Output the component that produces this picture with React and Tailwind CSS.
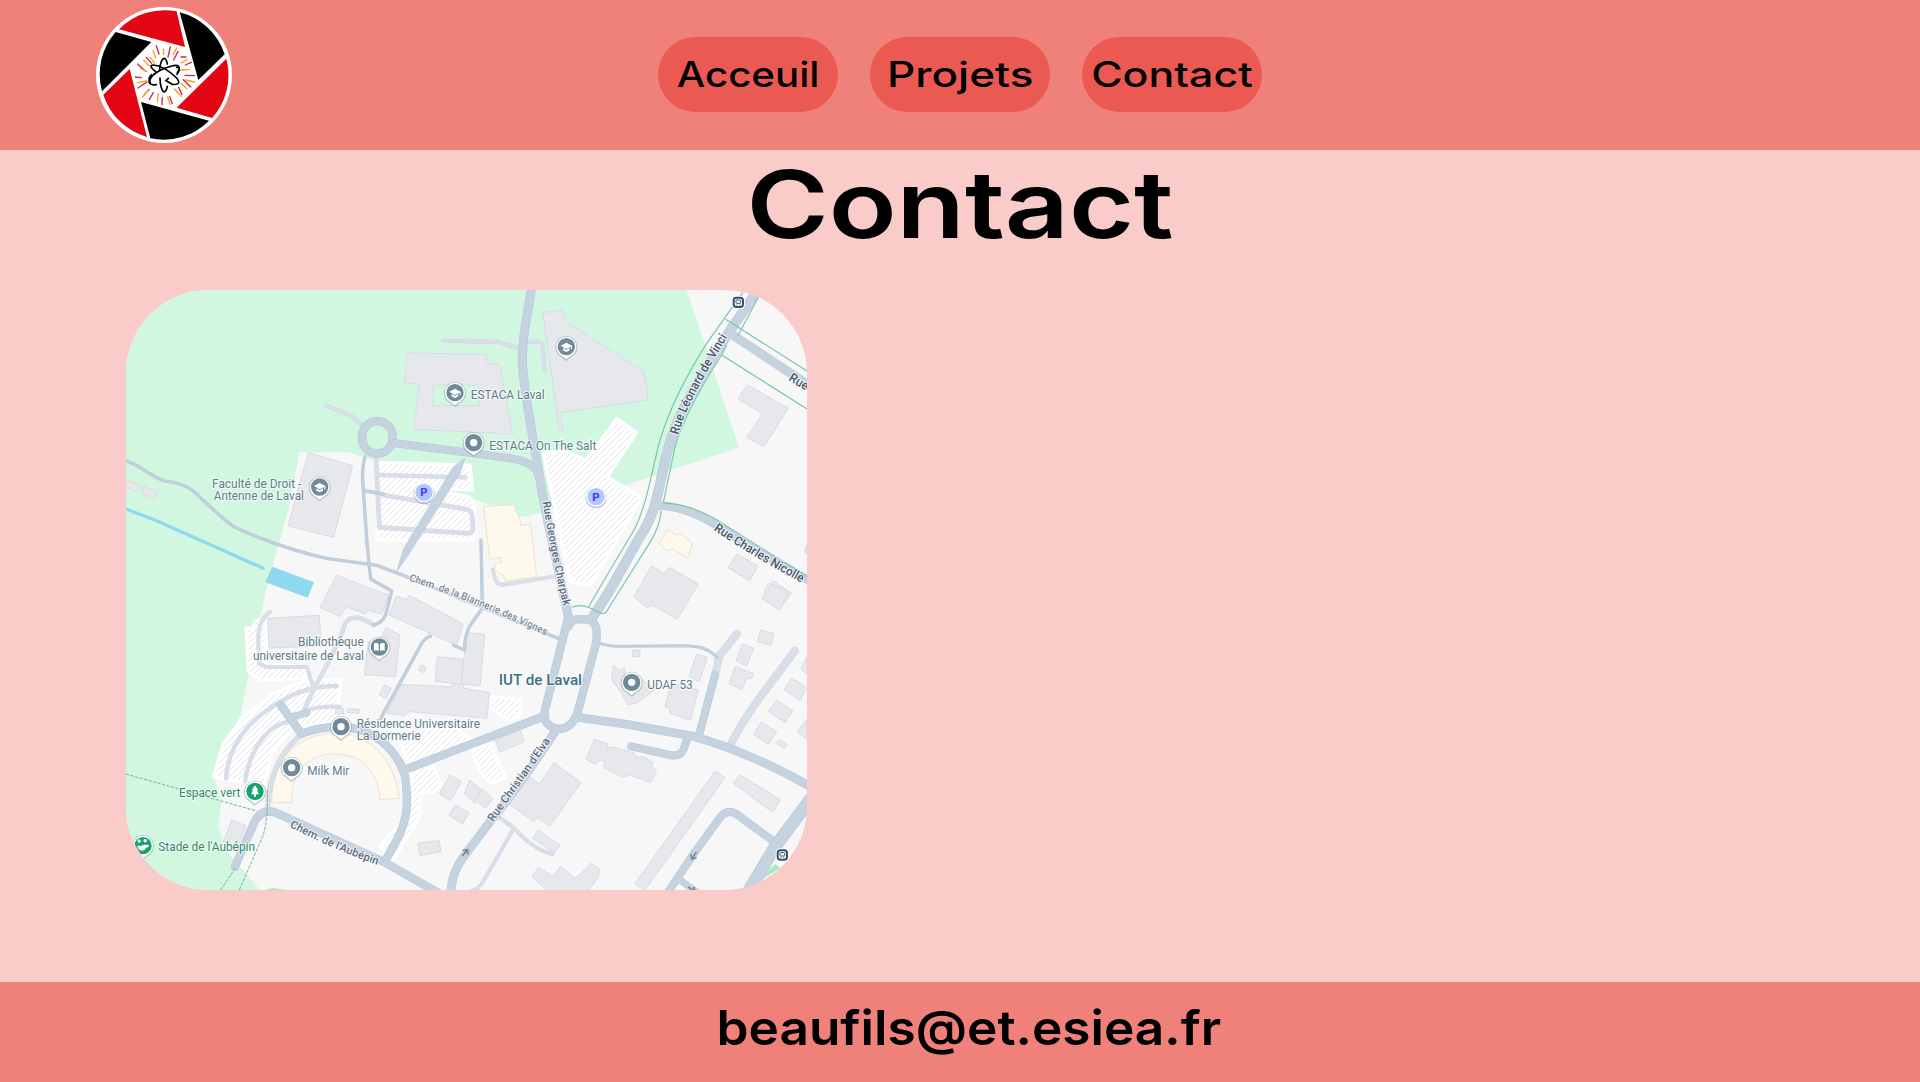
import React from "react";

const MAIN = "#c5d2e0";
const EDGE = "#b7c5d8";
const MINOR = "#d9dfe9";

const CASED_ROADS = [
  ["M1236 10C1230 80 1206 150 1207 240C1208 300 1225 400 1250 540C1262 610 1272 680 1300 800L1345 1010", 27],
  ["M825 490L1060 520L1170 535Q1245 545 1258 590", 24],
  ["M1900 50L1828 155C1800 200 1740 290 1705 360C1660 440 1640 510 1625 590C1610 660 1600 710 1560 770L1470 930L1418 1012", 30],
  ["M1828 158L2080 325", 27],
  ["M1605 676C1680 676 1740 700 1850 775C1930 825 2000 860 2080 910", 25],
  ["M1345 1010L1275 1290C1265 1325 1290 1345 1320 1347Q1355 1345 1372 1300L1427 1095Q1440 1022 1400 1018L1370 1018Q1352 1020 1345 1040", 25],
  ["M1275 1308L1020 1405L868 1464", 25],
  ["M545 1360C620 1335 720 1320 800 1397C860 1460 862 1500 860 1580C858 1640 825 1690 797 1740", 25],
  ["M345 1760L405 1622Q430 1580 475 1601L800 1750L960 1842", 25],
  ["M482 1275L545 1362", 25],
  ["M520 1310L560 1298", 22],
  ["M1372 1312L1520 1333L1720 1369C1830 1400 1950 1450 2080 1525", 26],
  ["M1736 1370L1785 1185", 24],
  ["M1703 1372L1690 1410Q1680 1430 1655 1426L1534 1399", 24],
  ["M1308 1350C1250 1440 1180 1540 1110 1625L1035 1725Q990 1780 993 1850", 26],
  ["M2100 1520L1965 1700L1870 1860", 38],
  ["M1965 1687L1850 1603Q1825 1585 1802 1610L1715 1730L1635 1850", 24],
  ["M1680 1800L1735 1840", 20],
];

const THIN_ROADS = [
  ["M18 542C70 560 100 597 140 604C180 608 215 620 245 657C285 690 310 722 350 745C430 780 530 815 620 835L770 856L860 890L1315 1075", 10],
  ["M735 530Q726 560 728 600L741 790L752 897L815 933L797 1005Q785 1030 760 1035", 10],
  ["M736 633L790 642", 10],
  ["M1440 1090Q1465 1100 1520 1099L1690 1097C1740 1098 1765 1105 1790 1132", 9],
  ["M1083 780L1087 985L1055 1030Q1035 1055 1033 1110L1000 1096", 10],
  ["M932 1069Q918 1070 905 1090L782 1315", 10],
];

const MINOR_ROADS = [
  ["M768 530L778 742L1045 760Q1058 760 1059 745L1056 705Q1054 690 1040 688L790 645", 14],
  ["M778 585L1036 592", 13],
  ["M968 182L1130 186L1195 203", 13],
  ["M1225 185L1258 186Q1268 188 1269 205L1274 272", 13],
  ["M620 378L690 405L730 437", 13],
  ["M1118 870L1125 895Q1130 915 1150 914L1310 888", 12],
  ["M760 1035C720 1005 680 1005 672 1040C660 1080 620 1160 585 1220L550 1295", 14],
  ["M450 996Q415 1020 415 1070L416 1150L440 1161L560 1161L580 1220", 12],
  ["M318 1495C325 1400 380 1320 490 1260C540 1230 590 1218 650 1218", 13],
  ["M375 1505C390 1400 450 1330 510 1325", 13],
  ["M550 1295Q590 1278 660 1280", 12],
  ["M535 1372C470 1430 445 1500 443 1585", 16],
  ["M1785 1187L1798 1128L1850 1062", 24],
  ["M2025 1112C1960 1200 1870 1310 1832 1395", 24],
  ["M1135 1610L1180 1642Q1240 1710 1298 1722", 12],
  ["M1182 1645L1092 1800Q1080 1825 1050 1835", 12],
];

const BUILDINGS = [
  "862,219 1100,223 1100,250 1138,252 1178,462 882,448 897,312 853,308",
  "1268,98 1328,90 1334,122 1573,277 1585,360 1322,398 1328,452 1318,450",
  "565,518 698,557 641,772 504,737",
  "18,602 60,613 53,634 18,623",
  "72,619 113,638 104,659 64,640",
  "1882,314 2005,385 1932,500 1880,472 1928,402 1855,357",
  "1595,857 1630,880 1648,862 1735,912 1672,1018 1600,976 1580,983 1542,950",
  "1850,822 1914,858 1888,903 1824,863",
  "1958,902 2014,939 1978,990 1925,955",
  "650,885 735,920 808,945 785,1003 742,990 735,1003 680,980 660,1010 600,982",
  "830,948 860,960 868,946 1030,1032 1010,1096 807,1005",
  "443,1015 598,1006 603,1098 447,1104",
  "799,1042 840,1065 827,1190 733,1184 745,1085 772,1095",
  "904,1155 919,1162 912,1178 895,1170",
  "952,1130 1030,1138 1025,1212 946,1204",
  "1040,1058 1094,1063 1080,1217 1024,1212",
  "846,1213 995,1221 998,1210 1030,1211 1032,1225 1109,1238 1101,1315 868,1295 855,1307 800,1300",
  "795,1215 815,1226 798,1256 777,1244",
  "647,1285 671,1285 671,1302 647,1302",
  "682,1286 719,1288 717,1300 682,1297",
  "1126,1382 1202,1350 1212,1385 1140,1416",
  "990,1485 1025,1505 992,1562 958,1542",
  "1050,1500 1090,1535 1065,1570 1033,1540",
  "1086,1525 1118,1557 1097,1585 1065,1560",
  "1005,1575 1047,1597 1027,1632 986,1605",
  "893,1690 958,1682 963,1715 900,1726",
  "335,1620 378,1637 350,1710 310,1685",
  "1302,1448 1383,1508 1290,1638 1253,1613 1240,1625 1165,1570 1228,1490 1258,1512",
  "1424,1378 1464,1392 1460,1405 1474,1400 1545,1420 1550,1432 1570,1430 1600,1448 1596,1460 1610,1470 1592,1508 1530,1485 1510,1492 1452,1463 1455,1445 1440,1440 1428,1454 1397,1438",
  "1786,1472 1815,1493 1575,1830 1544,1812",
  "1860,1484 1982,1560 1958,1597 1840,1510",
  "1254,1650 1320,1695 1302,1720 1238,1675",
  "1255,1762 1300,1790 1322,1758 1365,1795 1400,1765 1412,1750 1440,1768 1435,1790 1400,1840 1290,1840 1236,1790",
  "1730,1122 1762,1132 1738,1205 1707,1190",
  "1653,1210 1735,1230 1712,1320 1650,1300 1650,1285 1635,1280",
  "1538,1111 1560,1111 1560,1130 1538,1130",
  "1480,1156 1500,1172 1512,1162 1515,1190 1560,1195 1605,1228 1550,1270 1522,1274 1505,1240 1475,1200",
  "1868,1092 1901,1105 1880,1158 1848,1142",
  "1922,1050 1962,1060 1954,1096 1912,1086",
  "1845,1160 1900,1180 1895,1197 1882,1193 1865,1228 1828,1212",
  "2015,1194 2061,1222 2040,1262 1992,1228",
  "1970,1260 2018,1292 1995,1328 1945,1295",
  "1924,1326 1970,1355 1945,1394 1900,1362",
  "1978,1378 2003,1394 1993,1405 1968,1388",
  "2061,1130 2043,1165 2061,1185",
  "2061,1318 2032,1355 2061,1378",
  "2061,795 2052,815 2061,825",
];

const LOTS = [
  "775,547 1050,555 1058,630 920,625 1048,650 1062,665 1062,780 770,780",
  "1270,520 1330,510 1398,540 1490,415 1550,458 1463,590 1565,655 1410,918 1350,905",
  "378,1043 400,1043 403,1025 440,1010 440,1105 410,1150 560,1160 560,1195 420,1200 385,1175",
  "560,1200 663,1200 655,1280 668,1320 520,1345 455,1420 430,1520 280,1490 310,1390 370,1310 460,1240",
  "835,1375 970,1330 1010,1345 1060,1385 1040,1400 868,1450",
  "880,1455 945,1465 960,1510 940,1540 905,1535 895,1620 820,1740 780,1700 850,1620",
  "1112,1250 1202,1258 1200,1310 1170,1322 1110,1285",
  "1055,1412 1110,1385 1158,1495 1115,1510 1080,1480",
];

function Roads({ list, color, edge }) {
  return (
    <g fill="none" strokeLinejoin="round" strokeLinecap="round">
      {list.map(([d, w]) => <path key={`e${d}`} d={d} stroke={edge} strokeWidth={w} />)}
      {list.map(([d, w]) => <path key={d} d={d} stroke={color} strokeWidth={w - 3} />)}
    </g>
  );
}

function Pin({ x, y, color = "#6f8a99", kind }) {
  return (
    <g transform={`translate(${x} ${y})`}>
      <path d="M0 43L-18 29A33 33 0 1 1 18 29Z" fill="#8f9a9a" opacity=".55" />
      <path d="M0 38L-16 26A30 30 0 1 1 16 26Z" fill="#fff" />
      <circle r="26" fill={color} />
      {kind === "dot" && <circle r="11" fill="#fff" />}
      {kind === "school" && <path d="M-17-3L0-12L17-3V8H14V0L0 7ZM-10 4L0 10L10 4V11L0 16L-10 11Z" fill="#fff" />}
      {kind === "book" && <path d="M-16-11Q-7-14-2-9V12Q-8 8-16 11ZM16-11Q7-14 2-9V12Q8 8 16 11Z" fill="#fff" />}
      {kind === "tree" && <path d="M0-18L10-3H6L12 9H3V16H-3V9H-12L-6-3H-10Z" fill="#fff" />}
      {kind === "sport" && <path d="M-18 0H-4L3-3L17-3V4L9 6Q6 15-4 15Q-14 14-15 5ZM-12-9A5 5 0 1 1-11-9ZM6-10A5 5 0 1 1 7-10Z" fill="#fff" />}
    </g>
  );
}

function Parking({ x, y }) {
  return (
    <g transform={`translate(${x} ${y})`}>
      <circle cy="3" r="32" fill="#99a" opacity=".5" />
      <circle r="30" fill="#fff" />
      <circle r="26" fill="#b1c5ff" />
      <text y="12" textAnchor="middle" fontSize="34" fontWeight="700" fill="#4335f5">P</text>
    </g>
  );
}

function Stop({ x, y }) {
  return (
    <g transform={`translate(${x} ${y})`}>
      <rect x="-20" y="-20" width="40" height="40" rx="13" fill="#fff" />
      <rect x="-14" y="-14" width="28" height="28" rx="8" fill="#fff" stroke="#33506b" strokeWidth="6" />
      <rect x="-7" y="-7" width="14" height="10" rx="2" fill="none" stroke="#33506b" strokeWidth="3" />
      <path d="M-6 8H-3M3 8H6" stroke="#33506b" strokeWidth="3" />
    </g>
  );
}

function Arrow({ x, y, r }) {
  return (
    <path d="M-13 0H11M1-10L12 0L1 10" transform={`translate(${x} ${y}) rotate(${r})`} fill="none" stroke="#77889b" strokeWidth="5" />
  );
}

const LABELS = [
  [1052, 358, 222, "ESTACA Laval"],
  [1108, 509, 321, "ESTACA On The Salt"],
  [276, 623, 268, "Faculté de Droit -"],
  [281, 659, 271, "Antenne de Laval"],
  [534, 1098, 197, "Bibliothèque"],
  [399, 1139, 333, "universitaire de Laval"],
  [710, 1344, 370, "Résidence Universitaire"],
  [710, 1379, 192, "La Dormerie"],
  [562, 1484, 126, "Milk Mir"],
  [1582, 1228, 136, "UDAF 53"],
];

const STREETS = [
  ["leonard", "M1675 465C1692 390 1762 270 1838 145", 330, "Rue Léonard de Vinci", 38, "#46586b"],
  ["nicolle", "M1780 750Q1900 832 2075 925", 308, "Rue Charles Nicolle", 38, "#46586b"],
  ["rue", "M2004 300L2090 352", 62, "Rue", 38, "#46586b"],
  ["charpak", "M1268 666C1283 760 1308 890 1336 1000", 318, "Rue Georges Charpak", 33, "#5b6b7d"],
  ["vignes", "M866 902C1000 945 1120 990 1300 1078", 443, "Chem. de la Biannerie des Vignes", 31, "#7c8995"],
  ["aubepin", "M508 1640Q620 1700 790 1762", 288, "Chem. de l'Aubépin", 33, "#5b6b7d"],
  ["elva", "M1120 1627C1180 1540 1230 1475 1300 1370", 298, "Rue Christian d'Elva", 34, "#5b6b7d"],
];

function CampusMap() {
  return (
    <svg viewBox="18 30 2043 1800" className="block h-full w-full" fontFamily="Roboto, sans-serif">
      <defs>
        <pattern id="hatch" width="18" height="18" patternUnits="userSpaceOnUse">
          <rect width="18" height="18" fill="#fff" />
          <path d="M-4 4L4-4M0 18L18 0M14 22L22 14" stroke="#e0e0e4" strokeWidth="2.5" />
        </pattern>
        {STREETS.map(([id, d]) => <path key={id} id={id} d={d} />)}
      </defs>
      <rect x="18" y="30" width="2043" height="1800" fill="#f7f7f7" />
      <path d="M18 30H1700L1857 503L1510 617L1463 590L1398 540L1270 560L1302 688L1210 712L1020 642L775 547L685 517H538L505 690L440 920L385 1190L360 1310L310 1400L280 1490L305 1560L295 1640L325 1720L420 1830H18Z" fill="#d2f7e1" />
      <path d="M435 1830L460 1824L500 1830ZM1965 1752L1982 1764L1915 1805Z" fill="#a9eac0" />
      <g fill="url(#hatch)" stroke="#fff" strokeWidth="9" strokeLinejoin="round">
        {LOTS.map((p) => <polygon key={p} points={p} />)}
      </g>
      <g fill="#e7e8ec" stroke="#d8dbe8" strokeWidth="3">
        {BUILDINGS.map((p) => <polygon key={p} points={p} />)}
      </g>
      <path d="M1932 935L1945 910L1998 930L2002 945L1985 970" fill="none" stroke="#d8dbe8" strokeWidth="3" />
      <path d="M940 315H1077V377H938Z" fill="#d2f7e1" stroke="#d8dbe8" strokeWidth="3" />
      <g fill="#fef9ed" stroke="#eee2c8" strokeWidth="3">
        <path d="M1090 680L1185 674L1190 700L1198 703L1202 736L1232 733L1250 890L1156 903L1150 885L1123 872L1125 850L1145 848L1143 833L1110 838Z" />
        <path d="M1643 749L1670 765L1682 760L1717 790L1704 834L1660 808L1640 812L1617 790Z" />
        <path d="M455 1568C455 1440 530 1360 645 1360C750 1360 825 1440 838 1555L780 1559C775 1480 730 1422 645 1422C560 1422 510 1480 515 1568Z" />
      </g>
      <path d="M18 687L110 722L430 865" fill="none" stroke="#8fd9ef" strokeWidth="10" strokeLinecap="round" />
      <path d="M457 860L582 907L563 953L436 907Z" fill="#8fd9ef" />
      <Roads list={MINOR_ROADS} color={MINOR} edge="#d2d8e5" />
      <Roads list={THIN_ROADS} color="#c3cfdd" edge="#b9c7d6" />
      <path d="M1035 535L1020 580L865 825L830 875L850 808L1000 560Z" fill={MAIN} stroke={EDGE} strokeWidth="2" />
      <ellipse cx="772" cy="472" rx="46" ry="49" fill="#d2f7e1" stroke={EDGE} strokeWidth="26" />
      <ellipse cx="772" cy="472" rx="46" ry="49" fill="none" stroke={MAIN} strokeWidth="22" />
      <Roads list={CASED_ROADS} color={MAIN} edge={EDGE} />
      <g fill="none" stroke="#79c5aa" strokeWidth="3.5">
        <path d="M1868 38L1760 190C1700 285 1650 380 1620 480C1595 570 1585 660 1545 745L1435 930L1405 982M1355 982Q1380 972 1405 982L1418 988" />
        <path d="M1915 52L1853 168M1817 118L2061 273M1820 196L1805 225L2061 387" />
        <path d="M1805 225C1750 310 1690 410 1665 500L1630 668C1700 675 1750 690 1830 745L2061 890" />
        <path d="M1624 692Q1618 745 1588 790L1500 930L1458 997Q1450 1003 1440 998L1418 988" />
      </g>
      <g fill="none" stroke="#6fb5a0" strokeWidth="3" strokeDasharray="10 4">
        <path d="M18 1482L410 1593M302 1830L345 1765M358 1830L430 1665Q445 1610 442 1530" />
      </g>
      <Arrow x={1035} y={1718} r={-50} />
      <Arrow x={1722} y={1727} r={125} />
      <Arrow x={1715} y={1828} r={35} />

      <g stroke="#fff" strokeOpacity=".65" strokeWidth="7" strokeLinejoin="round" paintOrder="stroke">
        {STREETS.map(([id, , len, label, size, color]) => (
          <text key={id} fontSize={size} fontWeight="500" fill={color} textLength={len} lengthAdjust="spacingAndGlyphs">
            <textPath href={`#${id}`} textLength={len} lengthAdjust="spacingAndGlyphs">{label}</textPath>
          </text>
        ))}
        {LABELS.map(([x, y, len, label]) => (
          <text key={label} x={x} y={y} textLength={len} lengthAdjust="spacingAndGlyphs" fontSize="39" fill="#5f7c8a">{label}</text>
        ))}
        <text x="1136" y="1216" textLength="250" lengthAdjust="spacingAndGlyphs" fontSize="46" fontWeight="500" fill="#3d7181">IUT de Laval</text>
        <text x="177" y="1550" textLength="184" lengthAdjust="spacingAndGlyphs" fontSize="39" fill="#2f8a6b">Espace vert</text>
        <text x="115" y="1713" textLength="290" lengthAdjust="spacingAndGlyphs" fontSize="39" fill="#2f8a6b">Stade de l'Aubépin</text>
      </g>

      <Pin x={1005} y={338} kind="school" />
      <Pin x={1339} y={200} kind="school" />
      <Pin x={599} y={621} kind="school" />
      <Pin x={1061} y={488} kind="dot" />
      <Pin x={778} y={1101} kind="book" />
      <Pin x={663} y={1340} kind="dot" />
      <Pin x={515} y={1463} kind="dot" />
      <Pin x={1535} y={1207} kind="dot" />
      <Pin x={405} y={1534} kind="tree" color="#12a36f" />
      <Pin x={69} y={1697} kind="sport" color="#12a36f" />
      <Parking x={912} y={637} />
      <Parking x={1428} y={650} />
      <Stop x={1855} y={67} />
      <Stop x={1987} y={1725} />
    </svg>
  );
}

function Logo() {
  return (
    <svg viewBox="48 21 408 408" className="h-[136px] w-[136px]">
      <circle cx="252" cy="225" r="204" fill="#fff" />
      <g fill="#e30613">
        <path d="M117 88A192 192 0 0 1 290 34L315 141Z" />
        <path d="M439 176A192 192 0 0 1 396 354L290 323Z" />
        <path d="M201 411A192 192 0 0 1 70 284L149 207Z" />
      </g>
      <g fill="#000">
        <path d="M299 37A192 192 0 0 1 434 163L355 240Z" />
        <path d="M387 362A192 192 0 0 1 211 415L183 306Z" />
        <path d="M66 274A192 192 0 0 1 107 96L214 126Z" />
      </g>
      <g fill="none" strokeWidth="4" strokeLinecap="round">
        <path stroke="#dc1f45" d="M229 137L237 162M271 141L264 171M294 154L281 180M316 195L334 187M303 171L318 171M173 192L196 213M199 172L215 190M166 231L184 233M174 264L201 246M193 284L207 268M208 298L220 278M247 292L246 314M269 290L277 311M296 262L306 284M310 239L332 261M315 226L343 227" />
        <path stroke="#f2a51e" d="M250 147L251 163M290 144L280 163M219 152L227 174M210 172L224 189M302 189L321 179M181 205L201 215M301 210L327 209M172 248L200 243M187 292L203 272M235 281L232 305M263 291L270 314M283 267L305 290M303 250L321 267M316 240L343 246M191 181L207 197" />
      </g>
      <g fill="none" stroke="#000" strokeWidth="5" strokeLinecap="round">
        <path d="M239 211C239 190 247 175 253 175Q259 177 262 192" />
        <path d="M240 234C240 258 247 276 253 276Q259 274 262 259" />
        <path d="M229 254C210 257 204 248 210 239C218 220 248 205 275 198C298 192 303 201 292 218" />
        <path d="M227 215C211 202 209 195 220 195C242 196 270 215 290 234C302 249 296 255 277 253L258 242L265 235" />
        <path d="M215 224Q202 234 211 248M290 202C300 201 300 211 291 223" />
      </g>
    </svg>
  );
}

const NAV = [
  ["Acceuil", "scale-x-[1.15]"],
  ["Projets", "scale-x-[1.26]"],
  ["Contact", "scale-x-[1.225]"],
];

export default function App() {
  return (
    <div className="flex h-[1082px] w-full flex-col overflow-hidden bg-[#f9ccc9] font-['Inter',sans-serif] text-black">
      <header className="grid h-[150px] shrink-0 grid-cols-[1fr_auto_1fr] items-center bg-[#f0817a]">
        <div className="pl-24"><Logo /></div>
        <nav className="flex gap-8 pb-px">
          {NAV.map(([label, stretch]) => (
            <a key={label} href="#" className="flex h-[75px] w-[180px] items-center justify-center rounded-full bg-[#eb5a52]">
              <span className={`text-[35px] leading-none font-medium ${stretch}`}>{label}</span>
            </a>
          ))}
        </nav>
      </header>
      <main className="flex grow flex-col">
        <h1 className="flex h-[140px] items-start justify-center pt-[9px]">
          <span className="scale-x-[1.2] text-[93px] leading-[90px] font-semibold">Contact</span>
        </h1>
        <div className="ml-[126px] h-[600px] w-[681px] overflow-hidden rounded-[83px]">
          <CampusMap />
        </div>
      </main>
      <footer className="flex h-[100px] shrink-0 justify-center bg-[#f0817a] pt-[21px] pl-[17px]">
        <span className="scale-x-[1.07] text-[48px] leading-[50px] font-semibold">beaufils@et.esiea.fr</span>
      </footer>
    </div>
  );
}
